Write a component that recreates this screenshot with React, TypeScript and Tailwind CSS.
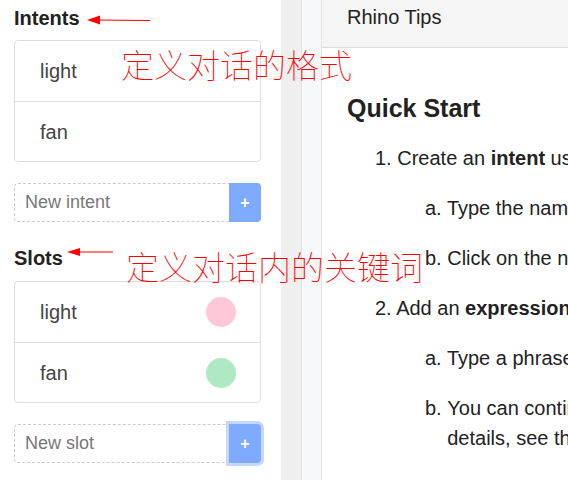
import React from "react";

const sans = { fontFamily: '"Liberation Sans", Arial, sans-serif' };
const cjk = { fontFamily: '"Noto Sans CJK SC", sans-serif' };

function Card({ items }: { items: { name: string; color?: string }[] }) {
  return (
    <div className="rounded-[4px] border border-[#dddddd] bg-white">
      {items.map((it, i) => (
        <div
          key={it.name}
          className={
            "flex h-[60px] items-center justify-between pl-[25px] pr-[24px] text-[20px] text-[#444]" +
            (i > 0 ? " border-t border-[#dddddd]" : "")
          }
        >
          <span>{it.name}</span>
          {it.color && <span className="h-[30px] w-[30px] rounded-full" style={{ background: it.color }} />}
        </div>
      ))}
    </div>
  );
}

function NewInput({ placeholder, focused }: { placeholder: string; focused?: boolean }) {
  return (
    <div className="flex h-[39px]">
      <div className="flex flex-1 items-center rounded-l-[4px] border border-r-0 border-dashed border-[#cccccc] pl-[10px] text-[18px] text-[#777]">
        {placeholder}
      </div>
      <div
        className={
          "flex w-[32px] items-center justify-center rounded-r-[4px] bg-[#7eaaff] text-[16px] font-bold text-white" +
          (focused ? " ring-[3px] ring-[#c5d7fb]" : "")
        }
      >
        +
      </div>
    </div>
  );
}

export default function App() {
  return (
    <div className="relative flex h-[480px] w-[568px] overflow-hidden bg-white text-[#222]" style={sans}>
      {/* Left panel */}
      <div className="w-[281px] shrink-0 pl-[14px] pr-[20px] pt-[6px]">
        <h2 className="mb-[10px] text-[20px] font-bold leading-[24px] text-[#222]">Intents</h2>
        <Card items={[{ name: "light" }, { name: "fan" }]} />
        <div className="mt-[21px]">
          <NewInput placeholder="New intent" />
        </div>
        <h2 className="mb-[11px] mt-[24px] text-[20px] font-bold leading-[24px] text-[#222]">Slots</h2>
        <Card
          items={[
            { name: "light", color: "#ffc8d9" },
            { name: "fan", color: "#aee9c4" },
          ]}
        />
        <div className="mt-[21px]">
          <NewInput placeholder="New slot" focused />
        </div>
      </div>

      {/* Gutter strips */}
      <div className="w-[21px] shrink-0 border-r border-[#e2e2e2] bg-[#efefef]" />
      <div className="w-[20px] shrink-0 border-r border-[#e2e2e2] bg-[#f7f8fa]" />

      {/* Right content */}
      <div className="flex min-w-0 flex-1 flex-col overflow-hidden">
        <div className="h-[48px] shrink-0 border-b border-[#dddddd] bg-[#f5f5f5] pl-[25px] pt-[5px] text-[20px] leading-[24px] whitespace-nowrap">
          Rhino Tips
        </div>
        <div className="whitespace-nowrap pl-[25px] pt-[45px] text-[20px] leading-[30px]">
          <h1 className="text-[25px] font-bold leading-[30px]">Quick Start</h1>
          <div className="mt-[20px] pl-[28px]">
            <div>
              1. Create an <b>intent</b> using the form on the left
            </div>
            <div className="mt-[20px] pl-[50px]">a. Type the name of the intent</div>
            <div className="mt-[20px] pl-[50px]">b. Click on the new intent</div>
            <div className="mt-[20px]">
              2. Add an <b>expression</b> to the intent
            </div>
            <div className="mt-[20px] pl-[50px]">a. Type a phrase and press enter</div>
            <div className="mt-[20px] flex pl-[50px]">
              <span>b.&nbsp;</span>
              <span>
                You can continue adding slots
                <br />
                details, see the docs
              </span>
            </div>
          </div>
        </div>
      </div>

      {/* Annotations */}
      <svg className="pointer-events-none absolute left-0 top-0" width="568" height="480">
        <line x1="150" y1="20.5" x2="96" y2="20" stroke="#ff0000" strokeWidth="1.2" />
        <polygon points="87,20 100,15.5 100,24.5" fill="#ff0000" />
        <line x1="113" y1="252" x2="76" y2="252" stroke="#ff0000" strokeWidth="1.2" />
        <polygon points="67,252 80,248 80,256" fill="#ff0000" />
      </svg>
      <div
        className="pointer-events-none absolute left-[121px] top-[44px] whitespace-nowrap text-[33px] font-thin leading-[40px] text-[#ff0000]"
        style={cjk}
      >
        定义对话的格式
      </div>
      <div
        className="pointer-events-none absolute left-[126px] top-[246px] whitespace-nowrap text-[33px] font-thin leading-[40px] text-[#ff0000]"
        style={cjk}
      >
        定义对话内的关键词
      </div>
    </div>
  );
}
